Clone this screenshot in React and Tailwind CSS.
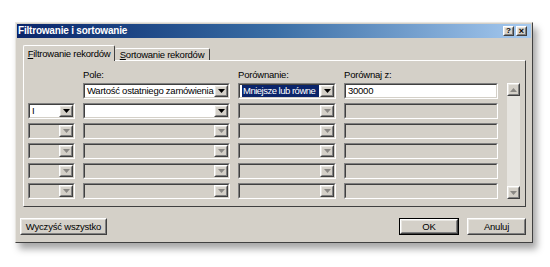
import React from "react";

const font = { fontFamily: '"Liberation Sans", Arial, sans-serif' };

const Arrow = ({ disabled }) => (
  <svg width="7" height="4" viewBox="0 0 7 4">
    <path d="M0 0h7L3.5 4z" fill={disabled ? "#8a8884" : "#000"} />
  </svg>
);

const Raised = ({ className = "", children }) => (
  <div className={`border border-t-white border-l-white border-b-[#404040] border-r-[#404040] ${className}`}>
    <div className="w-full h-full border border-t-[#e8e6e1] border-l-[#e8e6e1] border-b-[#808080] border-r-[#808080] bg-[#d4d0c8] flex items-center justify-center">
      {children}
    </div>
  </div>
);

// pole tekstowe / lista rozwijana w stylu Windows 2000
const Field = ({ w, enabled, combo = true, text, selected }) => (
  <div
    className={`${w} h-[16px] shrink-0 border border-t-[#808080] border-l-[#808080] border-b-white border-r-white`}
  >
    <div
      className={`h-full flex items-center border border-t-[#404040] border-l-[#404040] border-b-[#d4d0c8] border-r-[#d4d0c8] ${
        enabled ? "bg-white" : "bg-[#d4d0c8]"
      }`}
    >
      <div className="flex-1 min-w-0 pl-[2px] pr-[1px] text-[9.5px] tracking-[-0.25px] leading-none text-black whitespace-nowrap overflow-hidden">
        {text && (
          <span
            className={
              selected ? "block bg-[#0a246a] text-white tracking-[-0.5px] pl-[1px] py-[1px]" : ""
            }
          >
            {text}
          </span>
        )}
      </div>
      {combo && (
        <Raised className="w-[14px] h-full shrink-0">
          <Arrow disabled={!enabled} />
        </Raised>
      )}
    </div>
  </div>
);

const rows = [
  { first: null, pole: "Wartość ostatniego zamówienia", por: "Mniejsze lub równe", val: "30000", on: true },
  { first: "I", pole: "", por: "", val: "", on: "partial" },
  { on: false },
  { on: false },
  { on: false },
  { on: false },
];

const Row = ({ r }) => (
  <div className="flex gap-[8px] h-[16px]">
    {r.first === null ? (
      <div className="w-[47px] shrink-0" />
    ) : (
      <Field w="w-[47px]" enabled={r.on === "partial"} text={r.first} />
    )}
    <Field w="w-[147px]" enabled={!!r.on} text={r.pole} />
    <Field w="w-[98px]" enabled={r.on === true} text={r.por} selected />
    <Field w="w-[154px]" enabled={r.on === true} combo={false} text={r.val} />
  </div>
);

const Button = ({ w, label, isDefault }) => (
  <div className={`${w} h-[17px] ${isDefault ? "border border-black" : ""}`}>
    <Raised className="w-full h-full">
      <span className="text-[9.5px] tracking-[-0.2px] leading-none text-black whitespace-nowrap">{label}</span>
    </Raised>
  </div>
);

export default function App() {
  return (
    <div className="w-[550px] h-[267px] bg-white pt-[22px] pl-[15px]" style={font}>
      <div className="w-[518px] h-[221px] bg-[#d4d0c8] border border-t-[#e8e6e1] border-l-[#e8e6e1] border-b-[#404040] border-r-[#404040] shadow-[4px_6px_7px_rgba(0,0,0,0.35)] flex flex-col">
        <div className="h-[14px] mx-[1px] mt-[1px] bg-gradient-to-r from-[#0a246a] via-[#3a6ea5] to-[#a6caf0] flex items-center justify-between px-[1px]">
          <span className="text-[10px] font-bold text-white leading-none tracking-[-0.2px]">
            Filtrowanie i sortowanie
          </span>
          <div className="flex gap-[2px] pr-[3px]">
            <Raised className="w-[11px] h-[10px]">
              <span className="text-[8px] font-bold leading-none">?</span>
            </Raised>
            <Raised className="w-[11px] h-[10px]">
              <span className="text-[9px] font-bold leading-none">×</span>
            </Raised>
          </div>
        </div>

        <div className="flex flex-col pl-[7px] pr-[6px] pt-[6px]">
          <div className="flex items-end h-[16px] text-[9.5px] tracking-[-0.25px] text-black whitespace-nowrap">
            <div className="relative z-10 h-[16px] w-[92px] bg-[#d4d0c8] border border-b-0 border-t-white border-l-white border-r-[#404040] rounded-t-[2px] flex items-center justify-center -mb-[1px]">
              <span className="leading-none"><u>F</u>iltrowanie rekordów</span>
            </div>
            <div className="h-[12px] w-[95px] border border-b-0 border-t-white border-l-0 border-r-[#404040] rounded-t-[2px] flex items-center justify-center">
              <span className="leading-none"><u>S</u>ortowanie rekordów</span>
            </div>
          </div>

          <div className="h-[147px] border border-t-white border-l-white border-b-[#404040] border-r-[#404040] pl-[4px] pr-[6px] pt-[9px] flex gap-[9px]">
            <div className="flex flex-col">
              <div className="flex gap-[8px] h-[13px] text-[9.5px] tracking-[-0.2px] text-black leading-none">
                <div className="w-[47px]" />
                <div className="w-[147px]">Pole:</div>
                <div className="w-[98px]">Porównanie:</div>
                <div className="w-[154px]">Porównaj z:</div>
              </div>
              <div className="flex flex-col gap-[4px]">
                {rows.map((r, i) => (
                  <Row key={i} r={r} />
                ))}
              </div>
            </div>
            <div className="mt-[13px] w-[13px] h-[116px] flex flex-col bg-[#e6e4df]">
              <Raised className="w-[13px] h-[13px]">
                <svg width="7" height="4" viewBox="0 0 7 4">
                  <path d="M0 4h7L3.5 0z" fill="#8a8884" />
                </svg>
              </Raised>
              <div className="flex-1" />
              <Raised className="w-[13px] h-[13px]">
                <Arrow disabled />
              </Raised>
            </div>
          </div>

          <div className="flex justify-between mt-[11px]">
            <div className="-ml-[3px]">
              <Button w="w-[87px]" label="Wyczyść wszystko" />
            </div>
            <div className="flex gap-[8px]">
              <Button w="w-[60px]" label="OK" isDefault />
              <Button w="w-[59px]" label="Anuluj" />
            </div>
          </div>
        </div>
      </div>
    </div>
  );
}
